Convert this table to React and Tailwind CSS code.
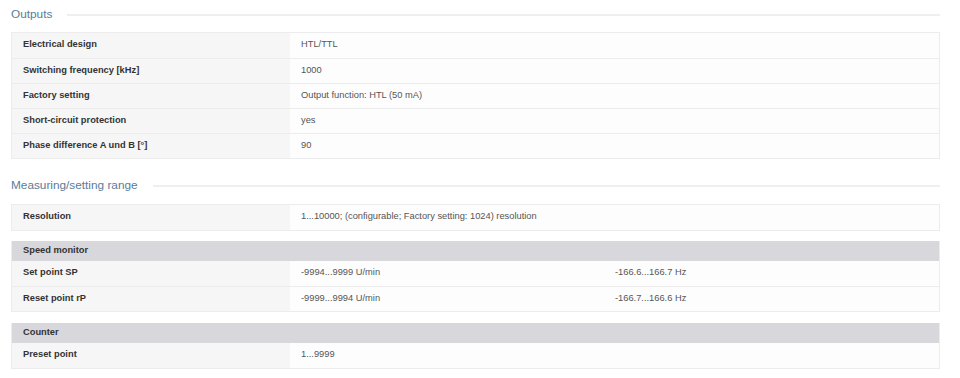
import React from "react";

const font = { fontFamily: '"Liberation Sans", Arial, sans-serif' };

function Heading({ title, className = "" }) {
  return (
    <div className={`flex items-center gap-[15px] ${className}`}>
      <div className="text-[11.8px] leading-none text-[#5a7b9b] whitespace-nowrap">{title}</div>
      <div className="flex-1 h-[2px] bg-[#efefef]" />
    </div>
  );
}

function Row({ label, values, first }) {
  const three = values.length > 1;
  return (
    <div
      className={`grid ${three ? "grid-cols-[278px_314px_1fr]" : "grid-cols-[278px_1fr]"} h-[25px] ${first ? "" : "border-t border-[#ececec]"}`}
    >
      <div className="bg-[#f6f6f6] flex items-center pl-[11px] text-[9.3px] font-bold text-[#333]">{label}</div>
      {values.map((v, i) => (
        <div key={i} className="bg-[#fdfdfd] flex items-center pl-[11px] text-[9.3px] text-[#555]">
          {v}
        </div>
      ))}
    </div>
  );
}

function GroupHeader({ title }) {
  return (
    <div className="h-[20px] bg-[#d7d7dc] flex items-center pl-[11px] text-[9.3px] font-bold text-[#333]">{title}</div>
  );
}

export default function App() {
  return (
    <div style={font} className="w-[960px] h-[378px] bg-white pl-[11px] pr-[20px] pt-[9px] overflow-hidden">
      <Heading title="Outputs" />
      <div className="mt-[11px] border border-[#ececec]">
        <Row first label="Electrical design" values={["HTL/TTL"]} />
        <Row label="Switching frequency [kHz]" values={["1000"]} />
        <Row label="Factory setting" values={["Output function: HTL (50 mA)"]} />
        <Row label="Short-circuit protection" values={["yes"]} />
        <Row label="Phase difference A und B [°]" values={["90"]} />
      </div>

      <Heading title="Measuring/setting range" className="mt-[21px]" />
      <div className="mt-[12px] border border-[#ececec]">
        <Row first label="Resolution" values={["1...10000; (configurable; Factory setting: 1024) resolution"]} />
      </div>

      <div className="mt-[10px] border border-[#ececec] border-t-0">
        <GroupHeader title="Speed monitor" />
        <Row first label="Set point SP" values={["-9994...9999 U/min", "-166.6...166.7 Hz"]} />
        <Row label="Reset point rP" values={["-9999...9994 U/min", "-166.7...166.6 Hz"]} />
      </div>

      <div className="mt-[11px] border border-[#ececec] border-t-0">
        <GroupHeader title="Counter" />
        <Row first label="Preset point" values={["1...9999"]} />
      </div>
    </div>
  );
}
